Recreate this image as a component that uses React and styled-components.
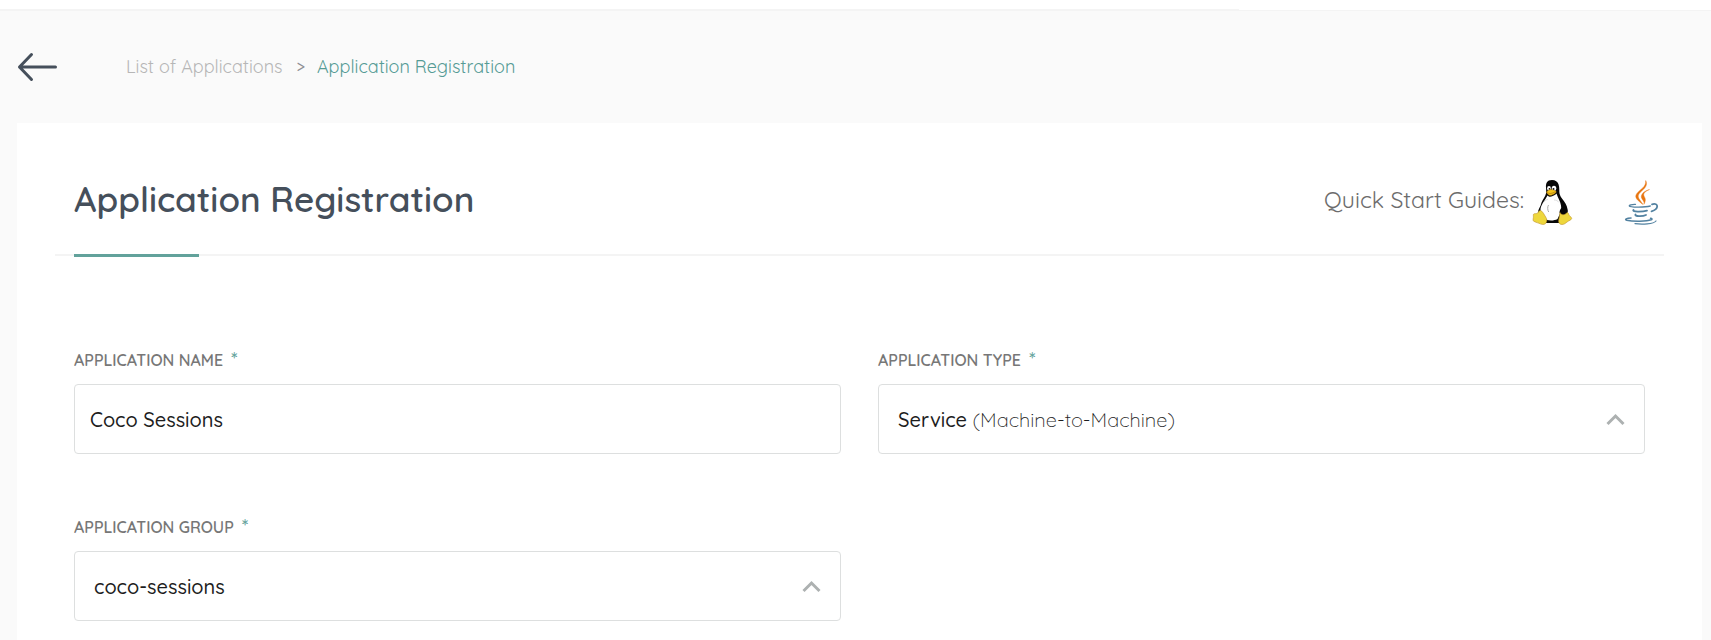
import React from "react";
import styled, { createGlobalStyle } from "styled-components";

const GlobalStyle = createGlobalStyle`
  *, *::before, *::after { box-sizing: border-box; }
  body {
    margin: 0;
    background: #fafafa;
    color: #1d1d1d;
    font-family: Quicksand, Lato, "Open Sans", sans-serif;
    font-weight: 500;
  }
`;

const Page = styled.div`
  display: flex;
  flex-direction: column;
  min-height: 100vh;
`;

const TopBar = styled.header`
  display: flex;
  align-items: flex-end;
  height: 11px;
  background: #ffffff;
  border-bottom: 1px solid #f4f4f4;
`;

const TopBarMenu = styled.div`
  width: 72.4%;
  border-bottom: 1px solid #f4f4f4;
`;

const CrumbBar = styled.nav`
  display: flex;
  align-items: center;
  gap: 68px;
  height: 112px;
  padding: 0 17px;
`;

const BackButton = styled.button`
  display: flex;
  padding: 0;
  border: 0;
  background: none;
  cursor: pointer;
`;

const Crumbs = styled.ol`
  display: flex;
  align-items: center;
  margin: 0;
  padding: 0;
  list-style: none;
  font-size: 18px;
  font-weight: 400;
  line-height: 24px;
`;

const Crumb = styled.li`
  color: ${(p) => (p.$current ? "#559b95" : "#b6b6b6")};
`;

const CrumbLink = styled.a`
  color: inherit;
  text-decoration: none;
`;

const CrumbMark = styled.li`
  padding: 0 12px 0 14px;
  color: #8f8f94;
  font-size: 16px;
  font-weight: 500;
`;

const Card = styled.main`
  flex: 1;
  margin: 0 9px 0 17px;
  padding: 53px 38px 16px;
  background: #ffffff;
`;

const CardHeader = styled.div`
  display: flex;
  flex-wrap: wrap;
  align-items: flex-start;
  justify-content: space-between;
  padding: 0 0 28px 19px;
`;

const Title = styled.h1`
  margin: 0;
  color: #454f5b;
  font-size: 35px;
  font-weight: 600;
  line-height: 46px;
`;

const Guides = styled.div`
  display: flex;
  align-items: flex-start;
  color: #6c6c6c;
  font-size: 23px;
  font-weight: 400;
  line-height: 48px;
`;

const GuideLink = styled.a`
  display: flex;
  margin-left: ${(p) => (p.$spaced ? "47px" : "8px")};
`;

const Divider = styled.div`
  height: 2px;
  padding-left: 19px;
  background: #f4f4f4;
`;

const DividerAccent = styled.div`
  width: 125px;
  height: 3px;
  background: #62a29b;
`;

const Form = styled.form`
  display: grid;
  grid-template-columns: repeat(2, minmax(0, 1fr));
  gap: 63px 37px;
  padding: 94px 19px 0;
`;

const Field = styled.div`
  display: flex;
  flex-direction: column;
  gap: 14px;
`;

const Label = styled.label`
  display: flex;
  gap: 8px;
  color: #777777;
  font-size: 16px;
  font-weight: 600;
  line-height: 20px;
  text-transform: uppercase;
`;

const Required = styled.span`
  color: #62a29b;
  font-size: 20px;
  font-weight: 500;
`;

const TextInput = styled.input`
  width: 100%;
  height: 70px;
  padding: 0 15px;
  border: 1px solid #dddfdf;
  border-radius: 4px;
  background: #ffffff;
  color: #1d1d1d;
  font: inherit;
  font-size: 20px;
  outline: none;
`;

const SelectBox = styled.div`
  position: relative;
  display: flex;
  align-items: center;
  justify-content: space-between;
  height: 70px;
  padding: 0 19px;
  border: 1px solid #dddfdf;
  border-radius: 4px;
  background: #ffffff;
  font-size: 20px;
`;

const NativeSelect = styled.select`
  position: absolute;
  inset: 0;
  width: 100%;
  opacity: 0;
  cursor: pointer;
  font: inherit;
`;

const Light = styled.span`
  font-weight: 300;
`;

function ArrowLeft() {
  return (
    <svg width="41" height="30" viewBox="0 0 41 30" fill="none" stroke="#454f5b" strokeWidth="3" strokeLinecap="round" strokeLinejoin="round" aria-hidden="true">
      <path d="M14.500 2.500 2.500 15l12 12.500M2.500 15h36" />
    </svg>
  );
}

function Chevron() {
  return (
    <svg width="19" height="13" viewBox="0 0 19 13" fill="none" stroke="#adb1b1" strokeWidth="3" aria-hidden="true">
      <path d="M1.500 11 9.500 3l8 8" />
    </svg>
  );
}

function Tux() {
  return (
    <svg width="42" height="50" viewBox="0 0 42 50" aria-hidden="true">
      <path fill="#080808" d="M20 4c-5 0-6.300 3.500-6 7.500.2 3.500.6 5.500-.8 8.200-1.500 3-3.800 6-4.600 9.800-.7 2-3 4.500-2.300 7.500L13 47h15l7-8c1.500-3.500.5-8-1.500-11.500-2-3.500-5-6-5.900-9.500-.6-2.600.1-6-1-9.500C25.500 5.500 23.500 4 20 4z" />
      <path fill="#fff" d="M15.500 19.500c1 1 2.500 1.500 3.800 1.100 2-.4 4.200-2 5.200-3.100 1.200 4 4 8 4.500 12 .4 3 .2 5.500-.5 7l-3 6.500c-3 1.800-8 1.800-11 .8L8.500 35c-.3-3 .9-5.500 2.300-8 1.700-2.500 3.400-5 4.700-7.500z" />
      <ellipse cx="17" cy="12.400" rx="1.900" ry="2.300" fill="#fff" />
      <ellipse cx="22" cy="12.400" rx="2.300" ry="2.600" fill="#fff" />
      <circle cx="17.500" cy="12.900" r=".9" fill="#111" />
      <circle cx="21.500" cy="12.900" r="1" fill="#111" />
      <path fill="#f4c51c" stroke="#b47a0d" strokeWidth=".5" d="M14.500 16c1.500-1.300 3-2.600 4.500-2.500 1.600.1 3.400 1 5 1.700.5 1-.4 1.800-1.500 2.500-1.600 1-3.500 2-5 1.500-1.200-.4-2.600-1.700-3-3.200z" />
      <path fill="none" stroke="#9d690a" strokeWidth=".6" d="M15 16.500c2.500 1.500 5 1.200 8-.6" />
      <path fill="none" stroke="#aaa" strokeWidth="1" d="M16.500 29c-1.200 2-1 5 .2 7" />
      <path fill="none" stroke="#d8d8d8" strokeWidth=".8" d="M12 26c1.500-2 2.500-2.500 4-2.500M22 24c2 0 4 .8 5 2.500" />
      <path fill="#eed73c" stroke="#c0922a" strokeWidth=".6" d="M8.500 34.500c2.500 1 3.500 4 5.200 6.500 1.600 2.500 1.500 5-.4 6.800-1.800 1.300-4 .6-6.300-.5-2.300-1-4-1-5.500-2.200-1-1.100.1-3-.1-4.800-.1-1.500-.2-2.300 1-2.600 2.400-.2 2.800 0 3.900-1.500.6-.9 1-1.700 2.200-1.700z" />
      <path fill="#080808" d="M27.500 36c.5-3 2-4.500 4.500-4.400 2 .2 3.900 2 3.400 4-1.500 3-5.700 3.500-7.700 2z" />
      <path fill="#eed73c" stroke="#c0922a" strokeWidth=".6" d="M28 36.500c.8 2 3 3 5.500 1.500 1-.7 1.200-1.500 2-1.500 1 .5 1 2 2 3.200 1.200 1.300 2.200 1.700 2.200 2.800-.2 1.400-2.800 2.100-4.700 3.500-1.500 1.300-3 2.500-5 2.500-2.500 0-3.700-2-3.300-4.300.7-2.500 1-5.200 1.300-7.700z" />
    </svg>
  );
}

function JavaCup() {
  return (
    <svg width="43" height="50" viewBox="0 0 43 50" aria-hidden="true">
      <g fill="#e8750f" stroke="#e8750f" strokeWidth=".4">
        <path d="M24.700 4.500c2.300 4.500-.6 7.500-4 10.500-3.200 3-4.700 4.700-2.200 8.500l3.500 5c-4.800-3.700-9-6.500-6.500-10.500 3-4.600 9.800-6.500 9.200-13.500z" />
        <path d="M28.500 13.500c-4.500 2-6.500 4-5.500 6.500.8 2 2.700 3.500-.1 8.300 1.100-3.200-2.600-4.900-2.600-7.500 0-3.600 4.700-6.500 8.200-7.300z" />
      </g>
      <g fill="none" stroke="#5382a1" strokeLinecap="round">
        <path strokeWidth="1.300" d="M14.500 28.300c-4-.2-6.500 1-6.200 1.600.6 1.400 15 1.600 21 .1" />
        <path strokeWidth="1.800" d="M31 28.300c7-2 7 5-.5 7" />
        <path strokeWidth="1.800" d="M12.500 34c-2 2 8.500 2 13.500.6M14.500 38.500c-1.500 2 7 2.300 10.500.5" />
        <path strokeWidth="1.600" d="M10 42c-4.500.1-6.800 1.500-4.300 2.200 6.500 1.600 20 1.300 24.500-.4 1.500-.7.400-1.300-.6-1.500" />
        <path strokeWidth="1.200" d="M14 47.700c7 .9 18.500.5 21-2.700" />
      </g>
    </svg>
  );
}

function FieldLabel({ id, children }) {
  return (
    <Label htmlFor={id}>
      {children}
      <Required aria-hidden="true">*</Required>
    </Label>
  );
}

function SelectField({ id, label, option, children }) {
  return (
    <Field>
      <FieldLabel id={id}>{label}</FieldLabel>
      <SelectBox>
        <span aria-hidden="true">{children}</span>
        <Chevron />
        <NativeSelect id={id} required defaultValue={option}>
          <option value={option}>{option}</option>
        </NativeSelect>
      </SelectBox>
    </Field>
  );
}

export default function App() {
  return (
    <Page>
      <GlobalStyle />
      <TopBar>
        <TopBarMenu />
      </TopBar>
      <CrumbBar aria-label="Breadcrumb">
        <BackButton type="button" aria-label="Back">
          <ArrowLeft />
        </BackButton>
        <Crumbs>
          <Crumb>
            <CrumbLink href="#applications">List of Applications</CrumbLink>
          </Crumb>
          <CrumbMark aria-hidden="true">&gt;</CrumbMark>
          <Crumb $current aria-current="page">Application Registration</Crumb>
        </Crumbs>
      </CrumbBar>
      <Card>
        <CardHeader>
          <Title>Application Registration</Title>
          <Guides>
            Quick Start Guides:
            <GuideLink href="#linux" aria-label="Linux guide">
              <Tux />
            </GuideLink>
            <GuideLink href="#java" aria-label="Java guide" $spaced>
              <JavaCup />
            </GuideLink>
          </Guides>
        </CardHeader>
        <Divider>
          <DividerAccent />
        </Divider>
        <Form>
          <Field>
            <FieldLabel id="app-name">Application Name</FieldLabel>
            <TextInput id="app-name" type="text" required defaultValue="Coco Sessions" />
          </Field>
          <SelectField id="app-type" label="Application Type" option="Service (Machine-to-Machine)">
            Service <Light>(Machine-to-Machine)</Light>
          </SelectField>
          <SelectField id="app-group" label="Application Group" option="coco-sessions">
            coco-sessions
          </SelectField>
        </Form>
      </Card>
    </Page>
  );
}
